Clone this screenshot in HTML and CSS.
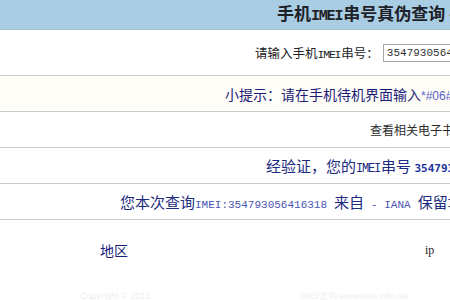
FILE: index.html
```html
<!DOCTYPE html>
<html lang="zh">
<head>
<meta charset="utf-8">
<link rel="stylesheet" href="styles.css">
</head>
<body>
<div class="page">
  <div class="header"><h1 class="title">手机<span class="lat">IMEI</span>串号真伪查询 - IMEI查询</h1></div>
  <div class="row row-form">
    <label class="label">请输入手机<span class="lat-s">IMEI</span>串号：</label>
    <input class="imei-input" type="text" value="354793056416318">
  </div>
  <div class="row row-tip"><span class="tip">小提示：请在手机待机界面输入<span class="code">*#06#</span>查看</span></div>
  <div class="row row-link"><span class="link">查看相关电子书</span></div>
  <div class="row row-result"><span class="result">经验证，您的<span class="lat-s">IMEI</span>串号 <b class="num">354793056416318</b></span></div>
  <div class="row row-origin"><span class="origin">您本次查询<span class="lat-b">IMEI:354793056416318</span><span class="gap"></span>来自<span class="gap"></span><span class="lat-b">- IANA</span><span class="gap"></span>保留地址</span></div>
  <div class="row row-area">
    <span class="area">地区</span>
    <span class="ip">ip</span>
  </div>
  <div class="footer">
    <span class="foot-a">Copyright © 2012</span>
    <span class="foot-b">IMEI查询 www.imei.info.net</span>
  </div>
</div>
</body>
</html>
```
FILE: styles.css
```css
html, body {
  margin: 0;
  padding: 0;
  background: #ffffff;
}
.page {
  width: 450px;
  height: 300px;
  overflow: hidden;
  font-family: "Noto Sans CJK SC", "DejaVu Sans", sans-serif;
  white-space: nowrap;
}
.header {
  height: 29px;
  background: #a9cee3;
  border-bottom: 1px solid #a4c0cc;
  display: flex;
  align-items: center;
  padding-left: 277px;
}
.title {
  margin: 0;
  font-size: 17px;
  line-height: 29px;
  font-weight: bold;
  color: #1e2228;
}
.lat {
  font-family: "Liberation Mono", monospace;
  font-size: 15px;
  letter-spacing: -1.2px;
  margin-right: 1px;
}
.lat-s {
  font-family: "Liberation Mono", monospace;
  font-size: 12px;
  letter-spacing: -1.2px;
  margin-right: 1px;
}
.lat-b {
  font-family: "Liberation Mono", monospace;
  font-size: 11px;
  color: #4a55b4;
}
.gap {
  display: inline-block;
  width: 7px;
}
.row {
  display: flex;
  align-items: center;
  border-bottom: 1px solid #c4ccd0;
  height: 35px;
}
.row-form {
  height: 45px;
  padding-left: 255px;
}
.label {
  font-size: 12.5px;
  color: #222;
  margin-right: 4px;
}
.label .lat-s {
  font-size: 11.5px;
}
.imei-input {
  margin: 0;
  height: 16px;
  width: 120px;
  padding: 0 0 0 3px;
  border: 1px solid #a8a8a8;
  font-family: "Liberation Mono", monospace;
  font-size: 11px;
  color: #333;
  background: #fff;
  flex-shrink: 0;
}
.row-tip {
  background: #fffdf7;
  padding-left: 225px;
}
.tip {
  font-size: 14px;
  color: #1c1c78;
}
.code {
  font-family: "Liberation Sans", sans-serif;
  font-size: 12px;
  color: #5560c8;
}
.row-link {
  padding-left: 370px;
}
.link {
  font-size: 12px;
  color: #2a2a2a;
}
.row-result {
  padding-left: 266px;
}
.result {
  font-size: 15px;
  color: #1c2a80;
}
.num {
  font-family: "DejaVu Sans Mono", monospace;
  font-size: 11px;
  color: #2233a0;
}
.row-origin {
  padding-left: 120px;
}
.origin {
  font-size: 15px;
  color: #1c2a80;
}
.row-area {
  border-bottom: none;
  height: 60px;
  padding-left: 100px;
}
.area {
  font-size: 14px;
  color: #1c1c78;
  width: 325px;
}
.ip {
  font-family: "Liberation Serif", serif;
  font-size: 12px;
  color: #222;
}
.footer {
  display: flex;
  align-items: center;
  height: 20px;
  margin-top: 6px;
  padding-left: 80px;
  font-family: "Liberation Sans", sans-serif;
  font-size: 9px;
  color: #eceff2;
}
.foot-a {
  width: 220px;
}
```
